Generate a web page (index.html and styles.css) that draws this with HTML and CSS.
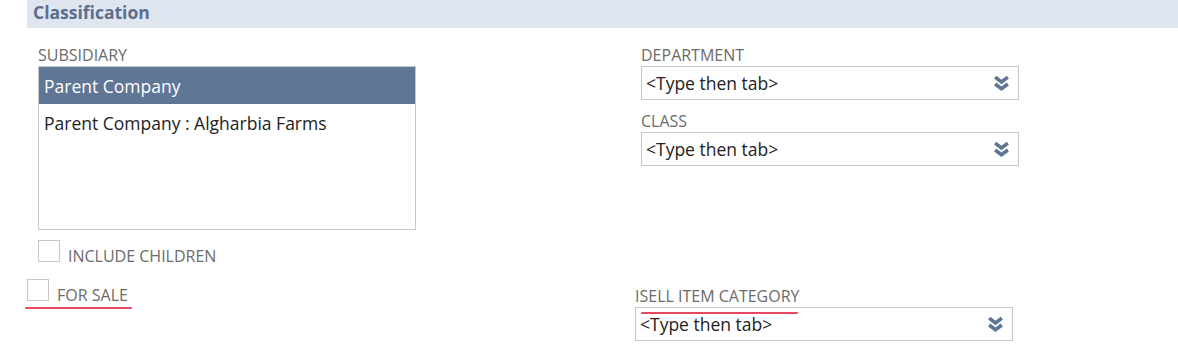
FILE: index.html
```html
<!DOCTYPE html>
<html>
<head>
<meta charset="utf-8">
<link rel="stylesheet" href="styles.css">
</head>
<body>
<div class="page">
  <div class="section-head">Classification</div>
  <div class="top-grid">
    <div class="col">
      <div class="label">SUBSIDIARY</div>
      <div class="listbox">
        <div class="option selected">Parent Company</div>
        <div class="option">Parent Company : Algharbia Farms</div>
      </div>
      <div class="check-row include">
        <span class="checkbox"></span>
        <span class="check-label">INCLUDE CHILDREN</span>
      </div>
    </div>
    <div class="col">
      <div class="label">DEPARTMENT</div>
      <div class="select">
        <span class="placeholder">&lt;Type then tab&gt;</span>
        <svg class="chev" viewBox="0 0 16 16" width="17" height="17"><path d="M2 2 L8 6.5 L14 2" /><path d="M2 8.5 L8 13 L14 8.5" /></svg>
      </div>
      <div class="label second">CLASS</div>
      <div class="select">
        <span class="placeholder">&lt;Type then tab&gt;</span>
        <svg class="chev" viewBox="0 0 16 16" width="17" height="17"><path d="M2 2 L8 6.5 L14 2" /><path d="M2 8.5 L8 13 L14 8.5" /></svg>
      </div>
    </div>
  </div>
  <div class="bottom-grid">
    <div class="col">
      <div class="check-row forsale">
        <span class="checkbox"></span>
        <span class="check-label">FOR SALE</span>
        <span class="mark mark-sale"></span>
      </div>
    </div>
    <div class="col isell">
      <div class="label">ISELL ITEM CATEGORY</div>
      <div class="select">
        <span class="placeholder">&lt;Type then tab&gt;</span>
        <svg class="chev" viewBox="0 0 16 16" width="17" height="17"><path d="M2 2 L8 6.5 L14 2" /><path d="M2 8.5 L8 13 L14 8.5" /></svg>
      </div>
      <span class="mark mark-isell"></span>
    </div>
  </div>
</div>
</body>
</html>
```
FILE: styles.css
```css
html, body {
  margin: 0;
  padding: 0;
  background: #ffffff;
}
.page {
  width: 1178px;
  height: 352px;
  font-family: "Open Sans", "Liberation Sans", sans-serif;
  overflow: hidden;
}
.section-head {
  margin-left: 27px;
  height: 28px;
  line-height: 24px;
  padding-left: 6px;
  background: #dfe6f0;
  color: #5a6e8e;
  font-weight: 700;
  font-size: 17.5px;
}
.top-grid {
  display: grid;
  grid-template-columns: 603px 378px;
  padding-left: 38px;
  padding-top: 17px;
}
.col {
  display: flex;
  flex-direction: column;
}
.label {
  font-size: 16px;
  line-height: 20px;
  color: #6b6b6b;
}
.label.second {
  margin-top: 11px;
}
.listbox {
  margin-top: 1px;
  width: 376px;
  height: 162px;
  border: 1px solid #c8c8c8;
}
.option {
  height: 37px;
  line-height: 38px;
  padding-left: 5px;
  font-size: 17.5px;
  color: #222222;
}
.option.selected {
  background: #607696;
  color: #ffffff;
}
.check-row {
  display: flex;
  align-items: flex-end;
  position: relative;
}
.checkbox {
  width: 20px;
  height: 20px;
  border: 1px solid #c8c8c8;
  background: #ffffff;
  flex: none;
}
.check-label {
  font-size: 16px;
  line-height: 18px;
  color: #6b6b6b;
  margin-left: 8px;
  position: relative;
  top: 3px;
}
.include {
  margin-top: 10px;
}
.select {
  margin-top: 1px;
  width: 372px;
  height: 32px;
  border: 1px solid #c8c8c8;
  display: flex;
  align-items: center;
  justify-content: space-between;
  padding-left: 4px;
}
.placeholder {
  font-size: 17.5px;
  color: #222222;
}
.chev {
  margin-right: 8px;
  fill: none;
  stroke: #5f7595;
  stroke-width: 3.4;
  stroke-linecap: butt;
  stroke-linejoin: miter;
}
.bottom-grid {
  display: grid;
  grid-template-columns: 608px 378px;
  padding-left: 27px;
  margin-top: 2px;
}
.forsale {
  margin-top: 15px;
}
.isell {
  position: relative;
  margin-top: 22px;
}
.mark {
  position: absolute;
  height: 2px;
  border-radius: 1px;
  background: #e8455f;
}
.mark-sale {
  left: -2px;
  width: 107px;
  top: 28px;
}
.mark-isell {
  left: 6px;
  width: 157px;
  top: 26px;
}
```
